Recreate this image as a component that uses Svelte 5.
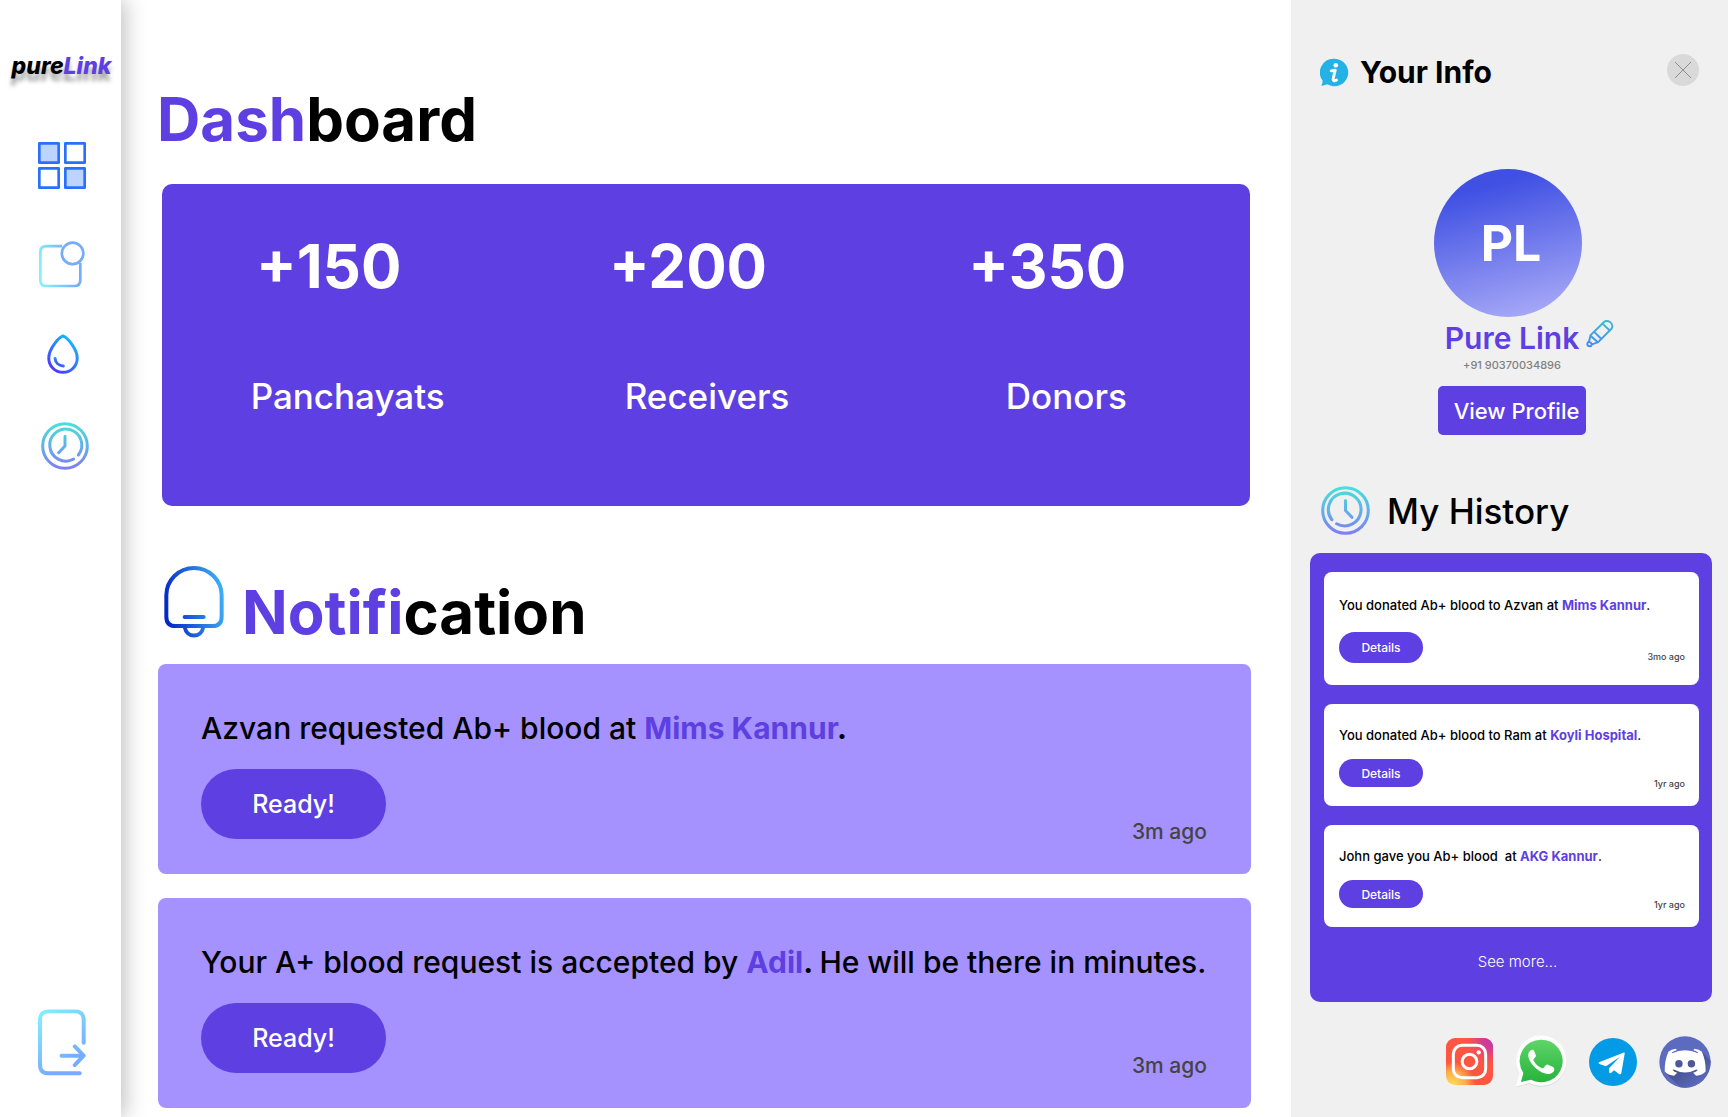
<script>
  const stats = [
    { value: '+150', label: 'Panchayats' },
    { value: '+200', label: 'Receivers' },
    { value: '+350', label: 'Donors' }
  ];

  const history = [
    { text: 'You donated Ab+ blood to Azvan at ', place: 'Mims Kannur', time: '3mo ago', tall: true },
    { text: 'You donated Ab+ blood to Ram at ', place: 'Koyli Hospital', time: '1yr ago', tall: false },
    { text: 'John gave you Ab+ blood \u00a0at ', place: 'AKG Kannur', time: '1yr ago', tall: false }
  ];
</script>

{#snippet clock(id, mirrored)}
  <svg class="clock" viewBox="124 364 144 144" aria-hidden="true">
    <defs>
      <linearGradient id={id} gradientUnits="userSpaceOnUse" x1="196" y1="365" x2="196" y2="507">
        <stop offset="0" stop-color="#45e3da" />
        <stop offset="1" stop-color="#7f7cf7" />
      </linearGradient>
    </defs>
    <g
      transform={mirrored ? 'translate(392 0) scale(-1 1)' : undefined}
      fill="none"
      stroke="url(#{id})"
      stroke-width="9"
      stroke-linecap="round"
      stroke-linejoin="round"
    >
      <circle cx="196" cy="436" r="67" />
      <path d="M236 463A48 48 0 1 0 222 475" />
      <path d="M196 407V436L177 456" />
    </g>
  </svg>
{/snippet}

<div class="app">
  <nav class="sidebar" aria-label="Main">
    <a class="logo" href="#home">pure<span>Link</span></a>
    <a class="nav-grid" href="#dashboard" aria-label="Dashboard">
      <svg width="48" height="47" viewBox="114 336 144 141" aria-hidden="true">
        <g stroke="#2970ff" stroke-width="8" stroke-linejoin="round" fill="none">
          <rect x="118" y="340" width="58" height="58" fill="#bcd4ff" />
          <rect x="196" y="340" width="58" height="58" />
          <rect x="118" y="415" width="58" height="58" />
          <rect x="196" y="415" width="58" height="58" fill="#bcd4ff" />
        </g>
      </svg>
    </a>
    <a class="nav-note" href="#notifications" aria-label="Notifications">
      <svg width="46" height="47" viewBox="118 632 137 140" aria-hidden="true">
        <defs>
          <linearGradient id="note" x1="0" y1="0.6" x2="0.8" y2="0.4">
            <stop offset="0" stop-color="#85efff" />
            <stop offset="1" stop-color="#75acfc" />
          </linearGradient>
        </defs>
        <path
          d="M187 647H140Q122 647 122 665V748Q122 766 140 766H223Q241 766 241 748V697"
          fill="none"
          stroke="url(#note)"
          stroke-width="8"
        />
        <circle cx="218" cy="669" r="32" fill="none" stroke="#75acfc" stroke-width="8" />
      </svg>
    </a>
    <a class="nav-drop" href="#blood" aria-label="Blood">
      <svg width="32" height="40" viewBox="141 101 96 121" aria-hidden="true">
        <defs>
          <linearGradient id="drop" x1="0.2" y1="1" x2="0.8" y2="0.1">
            <stop offset="0" stop-color="#4f35ff" />
            <stop offset="1" stop-color="#16b6ff" />
          </linearGradient>
        </defs>
        <g fill="none" stroke="url(#drop)" stroke-width="9" stroke-linecap="round" stroke-linejoin="round">
          <path d="M189 107C176 112 146 145 146 174A43 43 0 0 0 232 174C232 145 202 112 189 107Z" />
          <path d="M165 175C166 188 177 197 190 198" />
        </g>
      </svg>
    </a>
    <a class="nav-clock" href="#history" aria-label="History">{@render clock('clock-nav', false)}</a>
    <a class="nav-exit" href="#logout" aria-label="Log out">
      <svg width="48" height="67" viewBox="114 87 145 202" aria-hidden="true">
        <defs>
          <linearGradient id="exit" gradientUnits="userSpaceOnUse" x1="118" y1="95" x2="220" y2="240">
            <stop offset="0" stop-color="#85efff" />
            <stop offset="1" stop-color="#75acfc" />
          </linearGradient>
        </defs>
        <g fill="none" stroke="url(#exit)" stroke-width="12" stroke-linecap="round" stroke-linejoin="round">
          <path d="M252 189V120Q252 94 226 94H146Q120 94 120 120V255Q120 281 146 281H240" />
          <path d="M185 228H251M225 200L252 228L225 256" />
        </g>
      </svg>
    </a>
  </nav>

  <main>
    <h1><span>Dash</span>board</h1>
    <section class="stats" aria-label="Statistics">
      {#each stats as stat}
        <div class="stat">
          <strong>{stat.value}</strong>
          <span>{stat.label}</span>
        </div>
      {/each}
    </section>

    <div class="notice-head">
      <svg width="60" height="72" viewBox="72 77 180 216" aria-hidden="true">
        <defs>
          <linearGradient id="bell" gradientUnits="userSpaceOnUse" x1="75" y1="190" x2="250" y2="160">
            <stop offset="0" stop-color="#0528c8" />
            <stop offset="1" stop-color="#3eaef6" />
          </linearGradient>
        </defs>
        <g fill="none" stroke="url(#bell)" stroke-width="12" stroke-linecap="round" stroke-linejoin="round">
          <path d="M79 165A83 82 0 0 1 245 165V229Q245 257 217 257H107Q79 257 79 229Z" />
          <path d="M134 230.100L191 230" />
          <path d="M134 260C140 294 184 294 190 260" />
        </g>
      </svg>
      <h2><span>Notifi</span>cation</h2>
    </div>

    <section class="notices" aria-label="Notifications">
      <article class="notice">
        <p>Azvan requested Ab+ blood at <b><em>Mims Kannur</em>.</b></p>
        <div class="notice-foot">
          <button type="button">Ready!</button>
          <time>3m ago</time>
        </div>
      </article>
      <article class="notice">
        <p>Your A+ blood request is accepted by <b><em>Adil</em>.{' '}</b>He will be there in minutes.</p>
        <div class="notice-foot">
          <button type="button">Ready!</button>
          <time>3m ago</time>
        </div>
      </article>
    </section>
  </main>

  <aside>
    <header class="info-head">
      <svg width="29" height="29" viewBox="90 80 88 88" aria-hidden="true">
        <path d="M134 82A42 42 0 1 1 112 160Q103 164 94 164Q98 158 98 149A42 42 0 0 1 134 82Z" fill="#24b1e6" />
        <circle cx="138" cy="102" r="7" fill="#fff" />
        <path
          d="M124 119L136 117L130 143Q129 150 135 149L140 147"
          fill="none"
          stroke="#fff"
          stroke-width="9"
          stroke-linecap="round"
          stroke-linejoin="round"
        />
      </svg>
      <h2>Your Info</h2>
      <button class="close" type="button" aria-label="Close">
        <svg width="16" height="16" viewBox="0 0 16 16" aria-hidden="true">
          <path d="M0 0L16 16M16 0L0 16" stroke="#8e8e8e" stroke-width="1" />
        </svg>
      </button>
    </header>

    <section class="profile" aria-label="Profile">
      <div class="avatar">PL</div>
      <div class="name">
        <h3>Pure Link</h3>
        <button type="button" class="edit" aria-label="Edit name">
          <svg width="29" height="29" viewBox="556 502 88 88" aria-hidden="true">
            <defs>
              <linearGradient id="pen" gradientUnits="userSpaceOnUse" x1="600" y1="502" x2="590" y2="590">
                <stop offset="0" stop-color="#3fbdcb" />
                <stop offset="1" stop-color="#4786ff" />
              </linearGradient>
            </defs>
            <g fill="none" stroke="url(#pen)" stroke-width="6" stroke-linecap="round" stroke-linejoin="round">
              <path d="M573 548L613 509Q621 501 632 508Q643 516 637 528L596 569L577 576A7 7 0 1 1 568 568Z" />
              <path d="M609 513L631 534M584 538L605 559M573 550L594 569M568 568Q575 570 577 576" />
            </g>
          </svg>
        </button>
      </div>
      <p>+91 90370034896</p>
      <button type="button" class="view">View Profile</button>
    </section>

    <div class="history-head">
      {@render clock('clock-history', true)}
      <h2>My History</h2>
    </div>

    <section class="history" aria-label="My History">
      {#each history as item}
        <article class={['entry', item.tall && 'tall']}>
          <p>{item.text}<b>{item.place}</b>.</p>
          <div class="entry-foot">
            <button type="button">Details</button>
            <time>{item.time}</time>
          </div>
        </article>
      {/each}
      <a class="more" href="#more">See more...</a>
    </section>

    <footer>
      <a href="#instagram" aria-label="Instagram">
        <svg width="47" height="47" viewBox="81 54 141 141" aria-hidden="true">
          <defs>
            <radialGradient id="ig-a" gradientUnits="userSpaceOnUse" cx="100" cy="195" r="140">
              <stop offset="0" stop-color="#ffdd55" />
              <stop offset="0.28" stop-color="#ffb04a" />
              <stop offset="0.5" stop-color="#ff543e" />
              <stop offset="1" stop-color="#ff5645" />
            </radialGradient>
            <radialGradient id="ig-b" gradientUnits="userSpaceOnUse" cx="222" cy="54" r="95">
              <stop offset="0" stop-color="#b935b5" />
              <stop offset="0.35" stop-color="#d23c93" />
              <stop offset="1" stop-color="#ff5245" stop-opacity="0" />
            </radialGradient>
          </defs>
          <rect x="81" y="54" width="141" height="141" rx="27" fill="url(#ig-a)" />
          <rect x="81" y="54" width="141" height="141" rx="27" fill="url(#ig-b)" />
          <g fill="none" stroke="#fff" stroke-width="9">
            <rect x="103" y="76" width="97" height="97" rx="26" />
            <circle cx="151.500" cy="124.500" r="22" />
          </g>
          <circle cx="179" cy="97" r="6.500" fill="#fff" />
        </svg>
      </a>
      <a href="#whatsapp" aria-label="WhatsApp">
        <svg width="52" height="53" viewBox="288 43 156 159" aria-hidden="true">
          <defs>
            <linearGradient id="wa" x1="0" y1="0" x2="0" y2="1">
              <stop offset="0" stop-color="#5fd568" />
              <stop offset="1" stop-color="#26b33b" />
            </linearGradient>
          </defs>
          <path d="M367 46A76 76 0 1 1 331 189L291 200L301 160A76 76 0 0 1 367 46Z" fill="#d3d3d3" />
          <path d="M367 44A76 76 0 1 1 331 187L290 198L301 158A76 76 0 0 1 367 44Z" fill="#fdfdfd" />
          <path d="M367 57A64 64 0 1 1 336 177L306 184L313 157A64 64 0 0 1 367 57Z" fill="url(#wa)" />
          <path
            d="M340 87C333 88 327 96 328 105C330 128 360 157 387 160C396 160 405 154 406 147C406 143 405 141 402 139L387 132C384 131 382 132 380 134L374 141C372 143 370 143 368 142C358 138 349 130 344 120C343 118 343 117 344 115L350 108C351 106 351 104 350 102L345 90C344 87 343 87 340 87Z"
            fill="#fff"
          />
        </svg>
      </a>
      <a href="#telegram" aria-label="Telegram">
        <svg width="48" height="48" viewBox="502 57 144 144" aria-hidden="true">
          <circle cx="574" cy="129" r="72" fill="#039be5" />
          <path
            d="M532 130L605 101Q610 99 609 104L599 162Q598 168 592 165L577 154L569 161Q563 165 562 158V148L595 113L553 142L533 135Q528 132 532 130Z"
            fill="#fff"
          />
        </svg>
      </a>
      <a href="#discord" aria-label="Discord">
        <svg width="52" height="52" viewBox="718 49 154 154" aria-hidden="true">
          <defs>
            <linearGradient id="dc" gradientUnits="userSpaceOnUse" x1="780" y1="120" x2="835" y2="200">
              <stop offset="0" stop-color="#424b83" />
              <stop offset="1" stop-color="#5c6bc0" />
            </linearGradient>
            <clipPath id="dc-clip"><circle cx="795" cy="126" r="76" /></clipPath>
          </defs>
          <circle cx="795" cy="126" r="76" fill="#5c6bc0" />
          <path d="M846 97L880 131V210H790L736 156Z" fill="url(#dc)" clip-path="url(#dc-clip)" />
          <path
            d="M768 87Q754 89 746 96Q734 122 735 154Q745 165 763 167L772 158Q763 156 758 150L762 148Q795 166 829 148L833 150Q828 156 819 158L828 167Q846 165 856 154Q857 122 845 96Q837 89 823 87L819 92Q827 94 833 99Q795 84 757 99Q764 94 772 92Z"
            fill="#fff"
          />
          <path d="M757 99Q764 94 773 92M833 99Q827 94 818 92" fill="none" stroke="#5c6bc0" stroke-width="3" />
          <circle cx="777" cy="131" r="11" fill="#4c5898" />
          <circle cx="814" cy="131" r="11" fill="#4c5898" />
        </svg>
      </a>
    </footer>
  </aside>
</div>

<style>
  :global(body) {
    margin: 0;
    background: #fff;
    color: #000;
    font-family: Inter, 'Liberation Sans', sans-serif;
  }

  .app {
    display: grid;
    grid-template-columns: 121px minmax(0, 1fr) 437px;
    min-height: 100vh;
  }

  h1, h2, h3, p {
    margin: 0;
  }

  a {
    color: inherit;
    text-decoration: none;
  }

  svg {
    display: block;
    flex: none;
  }

  button {
    border: 0;
    padding: 0;
    background: #5e3fe2;
    color: #fff;
    font: inherit;
    cursor: pointer;
  }

  .sidebar {
    display: flex;
    flex-direction: column;
    align-items: center;
    box-sizing: border-box;
    padding: 51px 0 41px 2px;
    box-shadow: 4px 0 20px rgba(0, 0, 0, 0.25);
  }

  .logo {
    font-size: 23px;
    line-height: 30px;
    font-weight: 800;
    font-style: italic;
    text-shadow: 0 7px 4px rgba(0, 0, 0, 0.35);
  }

  .logo span, h1 span, main h2 span {
    color: #5e3fe2;
  }

  .nav-grid {
    margin-top: 61px;
  }

  .nav-note {
    margin-top: 52px;
  }

  .nav-drop {
    margin-top: 46px;
    padding-left: 2px;
  }

  .nav-clock {
    margin-top: 48px;
    padding-left: 6px;
  }

  .nav-clock .clock {
    width: 48px;
    height: 48px;
  }

  .nav-exit {
    margin-top: auto;
  }

  main {
    padding: 83px 40px 9px 36px;
  }

  h1, main h2 {
    font-size: 60px;
    line-height: 72px;
    font-weight: 700;
  }

  .stats {
    display: grid;
    grid-template-columns: repeat(3, 1fr);
    margin: 29px 1px 0 5px;
    padding: 46px 4px 88px 6px;
    border-radius: 10px;
    background: #5e3fe2;
    color: #fff;
  }

  .stat {
    display: flex;
    flex-direction: column;
    align-items: center;
    gap: 72px;
  }

  .stat strong {
    padding-right: 38px;
    font-size: 60px;
    line-height: 72px;
    font-weight: 700;
  }

  .stat span {
    font-size: 35px;
    line-height: 44px;
    font-weight: 500;
  }

  .notice-head {
    display: flex;
    gap: 18px;
    margin: 60px 0 16px 7px;
  }

  .notice-head h2 {
    margin-top: 10px;
  }

  .notices {
    display: flex;
    flex-direction: column;
    gap: 24px;
    margin-left: 1px;
  }

  .notice {
    padding: 44px 30px 26px 43px;
    border-radius: 8px;
    background: #a592ff;
  }

  .notice p {
    font-size: 30px;
    line-height: 40px;
    font-weight: 500;
  }

  .notice em {
    color: #5e3fe2;
    font-style: normal;
  }

  .notice b {
    font-weight: 700;
  }

  .notice-foot {
    display: flex;
    justify-content: space-between;
    align-items: flex-end;
    margin-top: 21px;
    padding-right: 14px;
  }

  .notice-foot button {
    width: 185px;
    height: 70px;
    margin-bottom: 9px;
    border-radius: 35px;
    font-size: 25px;
    font-weight: 500;
  }

  .notice-foot time {
    color: #444;
    font-size: 21px;
    line-height: 32px;
    font-weight: 500;
  }

  aside {
    padding-top: 54px;
    background: #f0f0f0;
  }

  .info-head {
    display: flex;
    align-items: center;
    gap: 11px;
    padding: 0 29px;
  }

  .info-head h2 {
    font-size: 30px;
    line-height: 36px;
    font-weight: 700;
  }

  .close {
    display: grid;
    place-items: center;
    align-self: flex-start;
    width: 32px;
    height: 32px;
    margin-left: auto;
    border-radius: 50%;
    background: #d9d9d9;
  }

  .profile {
    display: flex;
    flex-direction: column;
    align-items: center;
    margin-top: 79px;
    padding-left: 5px;
  }

  .avatar {
    display: grid;
    place-items: center;
    box-sizing: border-box;
    width: 148px;
    height: 148px;
    margin-right: 8px;
    padding-left: 6px;
    border-radius: 50%;
    background: linear-gradient(165deg, #3f50e3 16%, #b1b1f8 100%);
    color: #fff;
    font-size: 50px;
    font-weight: 700;
  }

  .name {
    display: grid;
    grid-template-columns: 1fr auto 1fr;
    gap: 6px;
    width: 100%;
    margin-top: 3px;
  }

  .name h3 {
    grid-column: 2;
    color: #5e3fe2;
    font-size: 30px;
    line-height: 36px;
    font-weight: 600;
  }

  .edit {
    justify-self: start;
    align-self: start;
    background: none;
  }

  .profile p {
    margin-top: 1px;
    color: #808080;
    font-size: 11px;
    line-height: 16px;
    font-weight: 500;
  }

  .view {
    height: 49px;
    margin-top: 13px;
    padding: 0 7px 0 16px;
    border-radius: 5px;
    font-size: 22px;
    font-weight: 500;
  }

  .history-head {
    display: flex;
    align-items: center;
    gap: 17px;
    margin-top: 51px;
    padding-left: 30px;
  }

  .history-head .clock {
    width: 49px;
    height: 49px;
  }

  .history-head h2 {
    font-size: 35px;
    line-height: 44px;
    font-weight: 500;
  }

  .history {
    display: flex;
    flex-direction: column;
    gap: 19px;
    margin: 18px 16px 0 19px;
    padding: 19px 13px 30px 14px;
    border-radius: 10px;
    background: #5e3fe2;
  }

  .entry {
    padding: 23px 14px 16px 15px;
    border-radius: 8px;
    background: #fff;
  }

  .entry p {
    font-size: 13px;
    line-height: 16px;
    font-weight: 500;
  }

  .entry b {
    color: #5e3fe2;
    font-weight: 700;
  }

  .entry-foot {
    display: flex;
    justify-content: space-between;
    align-items: flex-end;
    margin-top: 16px;
  }

  .entry button {
    width: 84px;
    height: 28px;
    margin-bottom: 3px;
    border-radius: 16px;
    font-size: 12px;
    font-weight: 500;
  }

  .entry time {
    color: #444;
    font-size: 9px;
    line-height: 12px;
    font-weight: 500;
  }

  .tall {
    padding: 25px 14px 22px 15px;
  }

  .tall .entry-foot {
    margin-top: 19px;
  }

  .tall button {
    height: 31px;
    margin-bottom: 0;
  }

  .more {
    align-self: center;
    margin-top: 6px;
    padding-left: 12px;
    color: #fff;
    font-size: 15px;
    line-height: 20px;
    font-weight: 300;
  }

  footer {
    display: flex;
    justify-content: flex-end;
    align-items: center;
    gap: 22px;
    margin-top: 33px;
    padding-right: 17px;
  }
</style>
